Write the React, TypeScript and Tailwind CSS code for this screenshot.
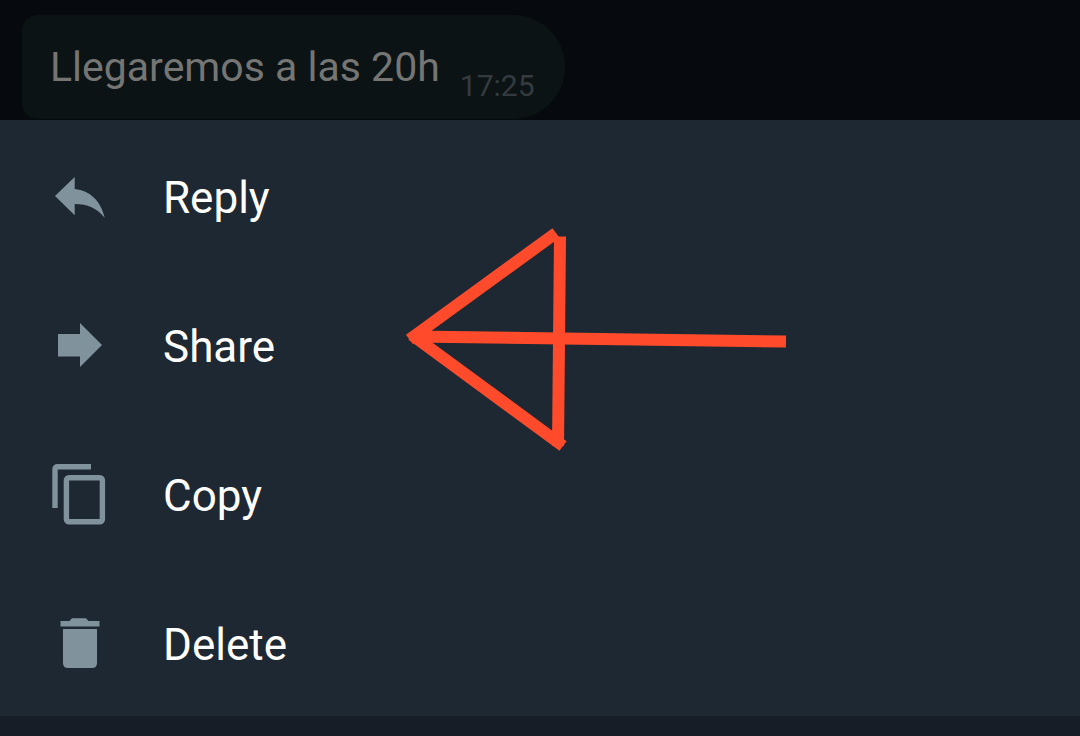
import type { ReactNode } from 'react';

type Action = {
  label: string;
  icon: ReactNode;
};

const actions: Action[] = [
  {
    label: 'Reply',
    icon: <path d="M7 34 L26.7 15 V27 C42 28.5 53 39 56.7 55.8 C49 46 39.5 42 26.7 42 V53.2 Z" />,
  },
  {
    label: 'Share',
    icon: <path d="M10 23 H32 V12 L54 34 L32 56 V45.5 H10 Z" />,
  },
  {
    label: 'Copy',
    icon: (
      <g fill="none" stroke="currentColor" strokeWidth="5.4">
        <path d="M7 48 V9.5 Q7 6.7 9.8 6.7 H43" />
        <rect x="18.4" y="17.7" width="36" height="44" rx="2.5" />
      </g>
    ),
  },
  {
    label: 'Delete',
    icon: (
      <>
        <path d="M12.5 12 H21.5 L24 9.3 H38 L40.5 12 H51.5 V17.6 H12.5 Z" />
        <path d="M15 20 H49 V54 Q49 59 44 59 H20 Q15 59 15 54 Z" />
      </>
    ),
  },
];

function MessageBubble({ text, time }: { text: string; time: string }) {
  return (
    <div className="flex h-[104px] w-fit items-end gap-5 rounded-l-2xl rounded-r-[52px] bg-[#0c1315] pb-[15px] pl-7 pr-[30px]">
      <p className="pb-[9px] text-[41px] leading-[56px] text-[#757673]">{text}</p>
      <time className="text-[30px] leading-[36px] text-[#343b3f]">{time}</time>
    </div>
  );
}

function ActionRow({ label, icon }: Action) {
  return (
    <li>
      <button type="button" className="flex h-[149px] w-full items-center gap-[51px] pl-12 text-left">
        <svg viewBox="0 0 64 65" className="h-[65px] w-16 shrink-0 text-[#80929c]" fill="currentColor" aria-hidden="true">
          {icon}
        </svg>
        <span className="pt-[6px] text-[44px] leading-[52px] text-white">{label}</span>
      </button>
    </li>
  );
}

// Hand-drawn pointer laid over the Share row
function Pointer() {
  return (
    <svg
      viewBox="0 0 400 240"
      className="pointer-events-none absolute left-[400px] top-[100px] h-[240px] w-[400px]"
      stroke="#ff4b2b"
      strokeWidth="12"
      fill="none"
      aria-hidden="true"
    >
      <path d="M12 116.5 L386 121.5" />
      <path d="M9.5 119.5 L156 13" />
      <path d="M160 16.5 L158 226" />
      <path d="M12 115 L163 226" />
    </svg>
  );
}

export default function App() {
  return (
    <div className="flex min-h-screen flex-col bg-[#161d26] font-[Roboto,sans-serif]">
      <header className="bg-[#060a0e] pl-[22px] pt-[15px] pb-px">
        <MessageBubble text="Llegaremos a las 20h" time="17:25" />
      </header>
      <main className="relative bg-[#1e2832]">
        <ul>
          {actions.map((action) => (
            <ActionRow key={action.label} {...action} />
          ))}
        </ul>
        <Pointer />
      </main>
    </div>
  );
}
